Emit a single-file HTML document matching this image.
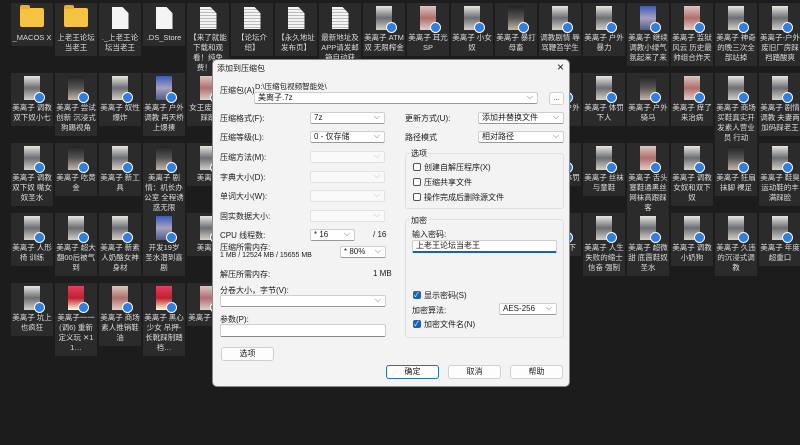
<!DOCTYPE html>
<html><head><meta charset="utf-8"><style>
*{margin:0;padding:0;box-sizing:border-box}
body{width:800px;height:445px;background:#1c1c1c;overflow:hidden;position:relative;font-family:"Liberation Sans","Noto Sans CJK SC",sans-serif}
.grid{position:absolute;left:11px;top:3px;display:grid;grid-template-columns:repeat(18,42px);column-gap:2px;grid-auto-rows:70px;align-items:start}
.t{background:#2b2b2b;padding:3px 1px 3px;text-align:center;color:#dcdcdc;font-size:7.5px;line-height:10px;word-break:break-all;overflow:hidden}
.th{width:16px;height:24px;margin:0 auto 3px;position:relative;background:linear-gradient(#c9c2bb,#8a8580 60%,#d8d2cc)}
.th:after{content:"";position:absolute;right:-5px;bottom:-3px;width:9px;height:9px;border-radius:50%;background:#2f7fe0;border:1px solid #fff}
.fo{width:24px;height:19px;margin:2px auto 6px;background:#f5c242;border-radius:2px;position:relative}
.fo:before{content:"";position:absolute;left:0;top:-3px;width:10px;height:4px;background:#e8b030;border-radius:2px 2px 0 0}
.fi{width:17px;height:22px;margin:1px auto 4px;background:#f4f4f4;clip-path:polygon(0 0,65% 0,100% 28%,100% 100%,0 100%)}
.fi.l{background:repeating-linear-gradient(#f4f4f4 0 2px,#bbb 2px 3px)}
.a{background:linear-gradient(#e9e6e1,#6c6e74 50%,#d5cfc6)}.b{background:linear-gradient(#3b5bb5,#a8a0c0 50%,#4e5d8a)}.c{background:linear-gradient(#222,#555 50%,#c9b7a8)}.d{background:linear-gradient(#d9c8c0,#b06e6e 50%,#e0d0c8)}.e{background:linear-gradient(#e04060,#c02030 50%,#ffd)}
.dlg{position:absolute;left:212px;top:59px;width:358px;height:328px;background:#f3f3f3;border:1px solid #888;border-radius:5px;font-size:8px;color:#1a1a1a;font-family:"Liberation Sans","Noto Sans CJK SC",sans-serif}
.dlg div{position:absolute;white-space:nowrap}
.cb{background:#fff;border:1px solid #cfcfcf;border-bottom-color:#999;border-radius:2px;height:12px;padding-left:3px;line-height:10px}
.cb:after{content:"⌵";position:absolute;right:4px;top:-1px;color:#666;font-size:8px}
.cb.dis{background:#f9f9f9;border-color:#e2e2e2}
.cb.dis:after{color:#bbb}
.ip{background:#fff;border:1px solid #cfcfcf;border-bottom-color:#888;border-radius:2px;height:13px}
.btn{background:#fdfdfd;border:1px solid #d0d0d0;border-radius:3px;height:14px;text-align:center;line-height:12px}
.gb{border:1px solid #e0e0e0;border-radius:3px}
.chk{width:8px;height:8px;border:1px solid #555;border-radius:2px;background:#fff}
.chk.on{background:#1e5fb4;border-color:#1e5fb4}
.chk.on:after{content:"✓";color:#fff;font-size:7px;position:absolute;left:0;top:-2px}
</style></head><body>
<div class="grid">
<div class="t"><div class="fo"></div>_MACOS X</div>
<div class="t"><div class="fo"></div>上老王论坛当老王</div>
<div class="t"><div class="fi"></div>._上老王论坛当老王</div>
<div class="t"><div class="fi"></div>.DS_Store</div>
<div class="t"><div class="fi l"></div>【来了就能下载和观看！纯免费！…</div>
<div class="t"><div class="fi l"></div>【论坛介绍】</div>
<div class="t"><div class="fi l"></div>【永久地址发布页】</div>
<div class="t"><div class="fi l"></div>最新地址及APP请发邮箱自动获</div>
<div class="t"><div class="th a"></div>美离子 ATM双 无限榨金</div>
<div class="t"><div class="th d"></div>美离子 耳光 SP</div>
<div class="t"><div class="th a"></div>美离子 小女奴</div>
<div class="t"><div class="th c"></div>美离子 暴打母畜</div>
<div class="t"><div class="th a"></div>调教剧情 辱骂鞭笞学生</div>
<div class="t"><div class="th a"></div>美离子 户外暴力</div>
<div class="t"><div class="th b"></div>美离子 继续调教小绿气氛起来了来</div>
<div class="t"><div class="th d"></div>美离子 监狱风云 历史最帅组合炸天</div>
<div class="t"><div class="th a"></div>美离子 神奇的晚三次全部站掉</div>
<div class="t"><div class="th a"></div>美离子-户外废旧厂房踩裆踏酸爽</div>

<div class="t"><div class="th a"></div>美离子 调教双下奴小七</div>
<div class="t"><div class="th c"></div>美离子 尝试创新 沉浸式狗踢视角</div>
<div class="t"><div class="th a"></div>美离子 奴性爆炸</div>
<div class="t"><div class="th b"></div>美离子 户外调教 再天桥上爆揍</div>
<div class="t"><div class="th d"></div>女王废弃厂踩踏</div>
<div class="t"><div class="th a"></div>美离子</div><div class="t"><div class="th a"></div>美离子</div><div class="t"><div class="th a"></div>美离子</div><div class="t"><div class="th a"></div>美离子</div><div class="t"><div class="th a"></div>美离子</div><div class="t"><div class="th a"></div>美离子</div><div class="t"><div class="th a"></div>美离子</div>
<div class="t"><div class="th a"></div>美离子 户外小年</div>
<div class="t"><div class="th a"></div>美离子 体罚下人</div>
<div class="t"><div class="th c"></div>美离子 户外骑马</div>
<div class="t"><div class="th d"></div>美离子 痒了来治病</div>
<div class="t"><div class="th a"></div>美离子 商场买鞋真实开发素人营业员 行动</div>
<div class="t"><div class="th a"></div>美离子 剧情 调教 夫妻两加码踩老王</div>

<div class="t"><div class="th a"></div>美离子 调教双下奴 嘴女奴圣水</div>
<div class="t"><div class="th c"></div>美离子 吃黄金</div>
<div class="t"><div class="th a"></div>美离子 新工具</div>
<div class="t"><div class="th c"></div>美离子 剧情：机长办公室 全程诱惑无限</div>
<div class="t"><div class="th a"></div>美离子</div>
<div class="t"><div class="th a"></div>美离子</div><div class="t"><div class="th a"></div>美离子</div><div class="t"><div class="th a"></div>美离子</div><div class="t"><div class="th a"></div>美离子</div><div class="t"><div class="th a"></div>美离子</div><div class="t"><div class="th a"></div>美离子</div><div class="t"><div class="th a"></div>美离子</div>
<div class="t"><div class="th a"></div>美离子 体罚</div>
<div class="t"><div class="th a"></div>美离子 丝袜与童鞋</div>
<div class="t"><div class="th d"></div>美离子 舌头塞鞋通黑丝网袜高跟踩客</div>
<div class="t"><div class="th a"></div>美离子 调教女奴和双下奴</div>
<div class="t"><div class="th c"></div>美离子 狂扇 抹脚 裸足</div>
<div class="t"><div class="th a"></div>美离子 鞋臭运动鞋的丰满踩脸</div>

<div class="t"><div class="th a"></div>美离子 人形椅 训练</div>
<div class="t"><div class="th a"></div>美离子 超大翻00后被气到</div>
<div class="t"><div class="th a"></div>美离子 新素人奶酪女神身材</div>
<div class="t"><div class="th b"></div>开发19岁 圣水潜到喜剧</div>
<div class="t"><div class="th a"></div>美离子</div>
<div class="t"><div class="th a"></div>美离子</div><div class="t"><div class="th a"></div>美离子</div><div class="t"><div class="th a"></div>美离子</div><div class="t"><div class="th a"></div>美离子</div><div class="t"><div class="th a"></div>美离子</div><div class="t"><div class="th a"></div>美离子</div><div class="t"><div class="th a"></div>美离子</div>
<div class="t"><div class="th a"></div>美离子 下</div>
<div class="t"><div class="th a"></div>美离子 人生失败的缩士信奋 强制</div>
<div class="t"><div class="th a"></div>美离子 超微甜 底霞鞋奴圣水</div>
<div class="t"><div class="th a"></div>美离子 调教小奶狗</div>
<div class="t"><div class="th a"></div>美离子 久违的沉浸式调教</div>
<div class="t"><div class="th a"></div>美离子 年度超重口</div>

<div class="t"><div class="th a"></div>美离子 坑上也疯狂</div>
<div class="t"><div class="th e"></div>美离子一一 (调6) 重新定义玩 ✕11…</div>
<div class="t"><div class="th d"></div>美离子 商场素人推销鞋油</div>
<div class="t"><div class="th e"></div>美离子 黑心少女 吊押-长靴踩制踏裆…</div>
<div class="t"><div class="th d"></div>美离子 黄金</div>
</div>

<div class="dlg">
<div style="left:4px;top:3px">添加到压缩包</div>
<div style="left:344px;top:0px;font-size:12px">×</div>
<div style="left:7px;top:25px">压缩包(A)</div>
<div style="left:42px;top:21px;font-size:7.5px">D:\压缩包视频智能处\</div>
<div class="cb" style="left:41px;top:32px;width:284px">美离子.7z</div>
<div class="btn" style="left:336px;top:32px;width:15px;height:13px;font-size:7px">...</div>

<div style="left:7px;top:53px">压缩格式(F):</div>
<div class="cb" style="left:97px;top:52px;width:75px">7z</div>
<div style="left:7px;top:72px">压缩等级(L):</div>
<div class="cb" style="left:97px;top:71px;width:75px">0 - 仅存储</div>
<div style="left:7px;top:92px">压缩方法(M):</div>
<div class="cb dis" style="left:97px;top:91px;width:75px"></div>
<div style="left:7px;top:112px">字典大小(D):</div>
<div class="cb dis" style="left:97px;top:111px;width:75px"></div>
<div style="left:7px;top:131px">单词大小(W):</div>
<div class="cb dis" style="left:97px;top:130px;width:75px"></div>
<div style="left:7px;top:151px">固实数据大小:</div>
<div class="cb dis" style="left:97px;top:150px;width:75px"></div>
<div style="left:7px;top:170px">CPU 线程数:</div>
<div class="cb" style="left:97px;top:169px;width:45px">* 16</div>
<div style="left:160px;top:170px">/ 16</div>
<div style="left:7px;top:182px">压缩所需内存:</div>
<div style="left:7px;top:192px;font-size:7px">1 MB / 12524 MB / 15655 MB</div>
<div class="cb" style="left:127px;top:186px;width:46px">* 80%</div>
<div style="left:7px;top:209px">解压所需内存:</div>
<div style="left:160px;top:209px">1 MB</div>
<div style="left:7px;top:225px">分卷大小，字节(V):</div>
<div class="cb" style="left:7px;top:235px;width:166px"></div>
<div style="left:7px;top:254px">参数(P):</div>
<div class="ip" style="left:7px;top:264px;width:166px"></div>
<div class="btn" style="left:8px;top:287px;width:53px">选项</div>

<div style="left:192px;top:53px">更新方式(U):</div>
<div class="cb" style="left:265px;top:52px;width:86px">添加并替换文件</div>
<div style="left:192px;top:72px">路径模式</div>
<div class="cb" style="left:265px;top:71px;width:86px">相对路径</div>
<div class="gb" style="left:192px;top:93px;width:159px;height:56px"></div>
<div style="left:197px;top:88px;background:#f3f3f3;padding:0 1px">选项</div>
<div class="chk" style="left:200px;top:103px"></div><div style="left:211px;top:102px">创建自解压程序(X)</div>
<div class="chk" style="left:200px;top:118px"></div><div style="left:211px;top:117px">压缩共享文件</div>
<div class="chk" style="left:200px;top:133px"></div><div style="left:211px;top:132px">操作完成后删除源文件</div>
<div class="gb" style="left:192px;top:159px;width:159px;height:119px"></div>
<div style="left:197px;top:155px;background:#f3f3f3;padding:0 1px">加密</div>
<div style="left:199px;top:169px">输入密码:</div>
<div class="ip" style="left:199px;top:180px;width:145px;border-bottom:2px solid #1e5fb4;padding-left:3px;line-height:10px">上老王论坛当老王</div>
<div class="chk on" style="left:200px;top:231px"></div><div style="left:211px;top:230px">显示密码(S)</div>
<div style="left:199px;top:245px">加密算法:</div>
<div class="cb" style="left:286px;top:243px;width:58px">AES-256</div>
<div class="chk on" style="left:200px;top:260px"></div><div style="left:211px;top:259px">加密文件名(N)</div>

<div class="btn" style="left:173px;top:305px;width:53px;border-color:#2a6cc0">确定</div>
<div class="btn" style="left:235px;top:305px;width:53px">取消</div>
<div class="btn" style="left:297px;top:305px;width:53px">帮助</div>
</div>
</body></html>
